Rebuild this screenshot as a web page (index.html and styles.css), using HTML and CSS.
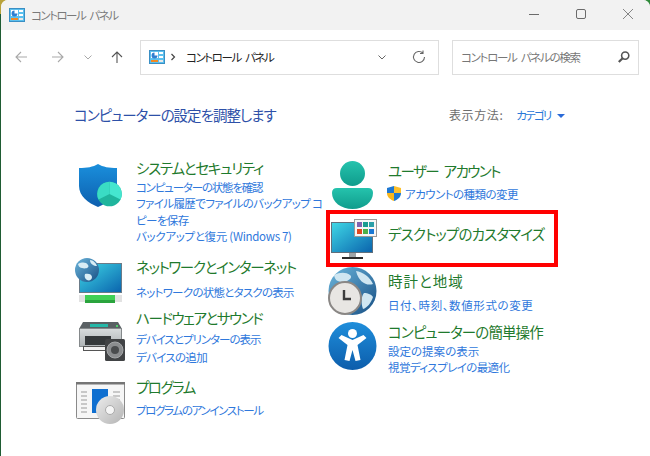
FILE: index.html
```html
<!DOCTYPE html>
<html lang="ja">
<head>
<meta charset="utf-8">
<title>コントロール パネル</title>
<link rel="stylesheet" href="styles.css">
</head>
<body>
<svg width="0" height="0" class="defs">
  <defs>
    <linearGradient id="screen" x1="0" y1="0" x2="1" y2="1"><stop offset="0" stop-color="#3fd8e6"/><stop offset="1" stop-color="#0a63ad"/></linearGradient>
    <linearGradient id="shield" x1="0" y1="0" x2="0" y2="1"><stop offset="0" stop-color="#1a8fdc"/><stop offset="1" stop-color="#0d5fae"/></linearGradient>
    <linearGradient id="teal" x1="0" y1="0" x2="0" y2="1"><stop offset="0" stop-color="#25c3ad"/><stop offset="1" stop-color="#0f9c8c"/></linearGradient>
    <linearGradient id="globe" x1="0" y1="0" x2="1" y2="1"><stop offset="0" stop-color="#6cb6dc"/><stop offset="1" stop-color="#174f84"/></linearGradient>
    <linearGradient id="access" x1="0" y1="0" x2="0" y2="1"><stop offset="0" stop-color="#1f8edb"/><stop offset="1" stop-color="#0c5dab"/></linearGradient>
    <linearGradient id="disc" x1="0" y1="0" x2="1" y2="1"><stop offset="0" stop-color="#ececec"/><stop offset="1" stop-color="#b4b4b4"/></linearGradient>
    <linearGradient id="printer" x1="0" y1="0" x2="0" y2="1"><stop offset="0" stop-color="#d8dcdd"/><stop offset="1" stop-color="#aeb3b5"/></linearGradient>
    <symbol id="cp" viewBox="0 0 16 16">
      <rect x="0.500" y="1.500" width="15" height="13" fill="#5cc0ee" stroke="#3a8fc4"/>
      <rect x="2" y="3" width="7" height="6" fill="#fff"/>
      <path d="M5.500 3.500a3 3 0 1 0 3 3h-3z" fill="#2f7fd0"/>
      <rect x="10" y="3" width="4" height="2" fill="#fff"/>
      <rect x="10" y="7" width="4" height="2" fill="#fff"/>
      <rect x="2" y="11" width="7" height="2" fill="#f08a24"/>
      <rect x="10" y="11" width="4" height="2" fill="#e8e8e8"/>
    </symbol>
  </defs>
</svg>
<div class="window">
  <header class="titlebar">
    <div class="title">
      <svg width="16" height="16"><use href="#cp"/></svg>
      <span>コントロール パネル</span>
    </div>
    <div class="winbtns">
      <svg width="12" height="12" viewBox="0 0 12 12"><path d="M1 6.500h10" stroke="#6b6b6b" fill="none"/></svg>
      <svg width="12" height="12" viewBox="0 0 12 12"><rect x="1.500" y="1.500" width="9" height="9" rx="1.500" stroke="#6b6b6b" fill="none"/></svg>
      <svg width="12" height="12" viewBox="0 0 12 12"><path d="M1 1l10 10M11 1L1 11" stroke="#858585" fill="none"/></svg>
    </div>
  </header>
  <nav class="toolbar">
    <div class="navbtns">
      <svg class="nav-back" width="14" height="14" viewBox="0 0 14 14"><path d="M13 7H2M7 2L2 7l5 5" stroke="#a9a9a9" stroke-width="1.100" fill="none"/></svg>
      <svg class="nav-fwd" width="14" height="14" viewBox="0 0 14 14"><path d="M1 7h11M7 2l5 5-5 5" stroke="#a9a9a9" stroke-width="1.100" fill="none"/></svg>
      <svg class="nav-down" width="10" height="10" viewBox="0 0 10 10"><path d="M1.500 3.500L5 7l3.500-3.500" stroke="#a9a9a9" fill="none"/></svg>
      <svg class="nav-up" width="14" height="14" viewBox="0 0 14 14"><path d="M7 13V2M2 7l5-5 5 5" stroke="#555" stroke-width="1.100" fill="none"/></svg>
    </div>
    <div class="address">
      <svg width="16" height="16"><use href="#cp"/></svg>
      <svg class="crumb" width="6" height="8" viewBox="0 0 6 8"><path d="M1.500 1l3 3-3 3" stroke="#444" stroke-width="1.200" fill="none"/></svg>
      <span class="addr-text">コントロール パネル</span>
      <svg class="addr-down" width="10" height="10" viewBox="0 0 10 10"><path d="M1.500 3.500L5 7l3.500-3.500" stroke="#666" fill="none"/></svg>
      <svg width="14" height="14" viewBox="0 0 14 14"><path d="M12.500 7a5.500 5.500 0 1 1-1.700-4M11 .5v3h-3" stroke="#666" stroke-width="1.100" fill="none"/></svg>
    </div>
    <div class="search">
      <span>コントロール パネルの検索</span>
      <svg width="14" height="14" viewBox="0 0 14 14"><circle cx="8.200" cy="5.600" r="3.600" stroke="#555" stroke-width="1.600" fill="none"/><path d="M5.600 8.200L1.800 12" stroke="#555" stroke-width="2.200"/></svg>
    </div>
  </nav>
  <main class="content">
    <div class="heading-row">
      <h1>コンピューターの設定を調整します</h1>
      <div class="viewby"><span class="vb-label">表示方法:</span><a class="vb-value">カテゴリ</a><span class="caret"></span></div>
    </div>
    <div class="columns">
      <div class="col col-left">
        <section class="item item-sys">
          <svg class="icon" width="43" height="43" viewBox="0 0 43 43">
            <path d="M19 0C24 3 30 4 38 4V22C38 32 29 39 19 43C9 39 0 32 0 22V4C8 4 14 3 19 0Z" fill="url(#shield)"/>
            <circle cx="30.500" cy="30" r="12.300" fill="#1fb59d"/>
            <path d="M30.500 30V17.700A12.300 12.300 0 0 1 41.500 35.500z" fill="#45e6cf"/>
            <path d="M30.500 30L19.500 35.500A12.300 12.300 0 0 1 30.500 17.700z" fill="#3adcc4"/>
          </svg>
          <div class="text">
            <h2>システムとセキュリティ</h2>
            <a class="t-status">コンピューターの状態を確認</a>
            <a class="t-history">ファイル履歴でファイルのバックアップ コ<br>ピーを保存</a>
            <a class="t-backup">バックアップと復元 (Windows 7)</a>
          </div>
        </section>
        <section class="item item-net">
          <svg class="icon" width="47" height="45" viewBox="0 0 47 45">
            <rect x="4.500" y="5.500" width="42" height="29" fill="url(#screen)" stroke="#6b7b88"/>
            <rect x="4" y="37" width="43" height="7" fill="#e2e2e2"/>
            <rect x="10" y="37" width="30" height="8" fill="#3fd055"/>
            <rect x="10" y="42" width="30" height="3" fill="#2aa43d"/>
            <circle cx="12" cy="12" r="12" fill="url(#globe)"/>
            <path d="M3 6c4-2 8-2 10 1s-3 4-6 3-3-1-4-4zM10 16c3-1 7 0 7 3s-3 4-5 3-3-4-2-6zM15 2c3 0 6 3 7 6-3 0-7-2-7-6z" fill="#d9edf5"/>
          </svg>
          <div class="text">
            <h2>ネットワークとインターネット</h2>
            <a class="t-netstatus">ネットワークの状態とタスクの表示</a>
          </div>
        </section>
        <section class="item item-hw">
          <svg class="icon" width="46" height="39" viewBox="0 0 46 39">
            <path d="M4 0h35l4 7H0z" fill="#5a6164"/>
            <rect x="11" y="2" width="18" height="3" fill="#25b8a8"/>
            <rect x="37" y="3" width="2" height="2" fill="#4fd06a"/>
            <rect x="0.500" y="6.500" width="42" height="18" fill="url(#printer)" stroke="#85898b"/>
            <rect x="6" y="14" width="26" height="9" fill="#35393b"/>
            <rect x="4.500" y="24.500" width="26" height="4" fill="#f1f1f1" stroke="#555"/>
            <rect x="26" y="17" width="20" height="22" rx="1.500" fill="#414345"/>
            <circle cx="36" cy="28" r="8" fill="#8b8d8f" stroke="#a5a7a9"/>
            <circle cx="36" cy="28" r="4" fill="#4a4c4e"/>
          </svg>
          <div class="text">
            <h2>ハードウェアとサウンド</h2>
            <a class="t-printers">デバイスとプリンターの表示</a>
            <a class="t-adddev">デバイスの追加</a>
          </div>
        </section>
        <section class="item item-prog">
          <svg class="icon" width="49" height="42" viewBox="0 0 49 42">
            <rect x="0.500" y="0.500" width="48" height="36" rx="1" fill="#f6f6f6" stroke="#8a8a8a"/>
            <rect x="0" y="0" width="49" height="2.500" fill="#757575"/>
            <path d="M5 10h6M5 14h6M5 18h6M5 22h6M5 26h6M5 30h6M37 10h7M37 14h7M37 18h7" stroke="#9a9a9a"/>
            <rect x="16" y="7" width="16" height="24" fill="#0f6fd0"/>
            <circle cx="34" cy="28" r="14" fill="url(#disc)"/>
            <circle cx="34" cy="28" r="4.500" fill="#f5f5f5" stroke="#aaa"/>
          </svg>
          <div class="text">
            <h2>プログラム</h2>
            <a class="t-uninstall">プログラムのアンインストール</a>
          </div>
        </section>
      </div>
      <div class="col col-right">
        <section class="item item-user">
          <svg class="icon" width="41" height="48" viewBox="0 0 41 48">
            <circle cx="20.500" cy="12.500" r="12.500" fill="url(#teal)"/>
            <path d="M5 27H36Q41 27 41 32C41 41 32 48 20.500 48C9 48 0 41 0 32Q0 27 5 27Z" fill="url(#teal)"/>
          </svg>
          <div class="text">
            <h2>ユーザー アカウント</h2>
            <a class="uac"><svg width="14" height="15" viewBox="0 0 14 15"><path d="M7 0l7 2v5H7z" fill="#fbc02d"/><path d="M7 0L0 2v5h7z" fill="#1e78d2"/><path d="M0 7c0 4 3 6.500 7 8V7z" fill="#f8b71c"/><path d="M7 7h7c0 4-3 6.500-7 8z" fill="#1e78d2"/></svg><span>アカウントの種類の変更</span></a>
          </div>
        </section>
        <section class="item item-desk">
          <svg class="icon" width="46" height="40" viewBox="0 0 46 40">
            <rect x="0.500" y="3.500" width="41" height="30" fill="url(#screen)" stroke="#5f6f7c"/>
            <rect x="18" y="34" width="7" height="4" fill="#9ea4a7"/>
            <rect x="11" y="38" width="21" height="2" fill="#2b2b2b"/>
            <rect x="23.500" y="0.500" width="22" height="17" fill="#f7f7f7" stroke="#9a9a9a"/>
            <rect x="26" y="3" width="5" height="5" fill="#8063b0"/><rect x="32" y="3" width="5" height="5" fill="#1a9c90"/><rect x="38" y="3" width="5" height="5" fill="#2a9fa8"/>
            <rect x="26" y="10" width="5" height="5" fill="#e2481f"/><rect x="32" y="10" width="5" height="5" fill="#4db04a"/><rect x="38" y="10" width="5" height="5" fill="#1a78d4"/>
          </svg>
          <div class="text"><h2>デスクトップのカスタマイズ</h2></div>
        </section>
        <section class="item item-clock">
          <svg class="icon" width="49" height="48" viewBox="0 0 49 48">
            <circle cx="24.500" cy="24" r="24" fill="url(#globe)"/>
            <path d="M6 8c6-3 12-3 16 0s-4 8-9 7-6-3-7-7zM28 4c7 1 14 6 17 13-6 2-14-1-17-13zM36 26c4 0 8 2 9 4-2 6-6 11-10 12-2-6-2-12 1-16z" fill="#cfe6f1"/>
            <circle cx="17" cy="31" r="16" fill="#e8e6e3" stroke="#8a8785" stroke-width="2"/>
            <path d="M16 23v9h7" stroke="#3d3d3d" stroke-width="2.400" fill="none"/>
          </svg>
          <div class="text">
            <h2>時計と地域</h2>
            <a class="t-format">日付、時刻、数値形式の変更</a>
          </div>
        </section>
        <section class="item item-ease">
          <svg class="icon" width="49" height="48" viewBox="0 0 48 48">
            <circle cx="24" cy="24" r="24" fill="url(#access)"/>
            <circle cx="24" cy="11.500" r="4.500" fill="#fff"/>
            <path d="M10 16l3-3 11 5 11-5 3 3-9 7 3 15-5 1-3-11-3 11-5-1 3-15z" fill="#fff"/>
          </svg>
          <div class="text">
            <h2>コンピューターの簡単操作</h2>
            <a class="t-suggest">設定の提案の表示</a>
            <a class="t-visual">視覚ディスプレイの最適化</a>
          </div>
        </section>
      </div>
    </div>
  </main>
</div>
</body>
</html>
```
FILE: styles.css
```css
* { box-sizing: border-box; margin: 0; padding: 0; }
html, body { width: 650px; height: 456px; overflow: hidden; }
body {
  background:
    linear-gradient(#2f8a3a, #2f8a3a) right top / 20px 10px no-repeat,
    linear-gradient(180deg, #b9a23c 0, #b9a23c 14px, #1f5c33 14px);
  font-family: "Noto Sans CJK JP", "Noto Sans", sans-serif;
  font-feature-settings: "palt";
  color: #333;
}
.defs { position: absolute; }
svg { display: block; flex: none; }
.window { width: 649px; height: 456px; margin-left: 1px; display: flex; flex-direction: column; background: #fff; border-radius: 7px 7px 0 0; overflow: hidden; }

.titlebar { height: 30px; background: #f2f2f2; display: flex; align-items: center; justify-content: space-between; padding: 0 16px 0 8px; flex: none; }
.title { display: flex; align-items: center; gap: 6px; font-size: 11.500px; letter-spacing: -1.500px; word-spacing: 3px; color: #7a7a7a; }
.winbtns { display: flex; gap: 35px; margin-top: -2px; }

.toolbar { height: 54px; display: flex; align-items: center; padding-left: 13px; flex: none; }
.navbtns { width: 126px; display: flex; align-items: center; flex: none; }
.nav-fwd { margin-left: 23px; }
.nav-down { margin-left: 18px; }
.nav-up { margin-left: 17px; }
.address { width: 299px; height: 35px; border: 1px solid #dedede; display: flex; align-items: center; padding: 0 12px 0 8px; flex: none; }
.crumb { margin-left: 5px; }
.addr-text { margin-left: 10px; font-size: 11.500px; letter-spacing: -1.400px; word-spacing: 3px; color: #222; flex: 1; }
.addr-down { margin-right: 25px; }
.search { width: 187px; height: 35px; margin-left: 13px; border: 1px solid #dedede; display: flex; align-items: center; justify-content: space-between; padding: 0 7px 0 8px; font-size: 11.500px; letter-spacing: -1.300px; word-spacing: 3px; color: #777; }

.content { flex: 1; padding: 18px 0 0 73px; }
.heading-row { display: flex; align-items: center; height: 25px; }
h1 { font-size: 14.500px; font-weight: 400; letter-spacing: -1px; color: #2d50a8; line-height: 25px; width: 375px; }
.viewby { display: flex; align-items: center; }
.vb-label { color: #6d6d6d; font-size: 12px; letter-spacing: .6px; }
.vb-value { color: #2a78d8; margin-left: 13px; font-size: 11.500px; letter-spacing: -1.800px; }
.caret { margin: 2px 0 0 7px; border: 4px solid transparent; border-top: 4px solid #2a6ad8; border-bottom: 0; }

.columns { display: flex; margin-top: 31px; }
.col { display: flex; flex-direction: column; }
.col-left { width: 254px; }
.col-right { width: 250px; padding-top: 3px; }
.item { display: grid; grid-template-columns: 62px 1fr; align-items: start; }
.col-right .item { grid-template-columns: 60px 1fr; }
.text { display: flex; flex-direction: column; }
h2 { font-size: 14.500px; font-weight: 400; color: #1f7a2d; line-height: 20px; white-space: nowrap; }
.text a { font-size: 11.500px; color: #2f78dc; line-height: 16.600px; white-space: nowrap; }

/* left column */
.item-sys { height: 99px; }
.item-sys .icon { margin: 6px 0 0 5px; }
.item-sys h2 { letter-spacing: -1.250px; }
.t-status { margin-top: .7px; letter-spacing: -1.200px; }
.t-history { letter-spacing: -.6px; }
.t-backup { letter-spacing: -.3px; }

.item-net { height: 51px; }
.item-net .icon { margin: 1px 0 0 1px; }
.item-net h2 { letter-spacing: -1.350px; }
.t-netstatus { margin-top: 6.700px; letter-spacing: -.75px; }

.item-hw { height: 69px; }
.item-hw .icon { margin: 14px 0 0 5px; }
.item-hw h2 { letter-spacing: -1.400px; }
.text .t-printers { margin-top: 1.700px; line-height: 18px; letter-spacing: -1px; }
.text .t-adddev { line-height: 18px; letter-spacing: -.7px; }

.item-prog .icon { margin: 5px 0 0 2px; }
.item-prog h2 { letter-spacing: -1.500px; }
.t-uninstall { margin-top: 4.700px; letter-spacing: -1.350px; }

/* right column */
.item-user { height: 49px; }
.item-user .icon { margin-left: 4px; }
.item-user h2 { letter-spacing: -1.600px; word-spacing: 4px; }
.text .uac { display: flex; align-items: center; gap: 4px; margin: 4.700px 0 0 -1px; letter-spacing: -.55px; }

.col-right .item-desk { height: 57px; width: 232px; margin-left: -2px; border: 4px solid #f00; padding-left: 1px; grid-template-columns: 57px 1fr; }
.item-desk .icon { margin-top: 5px; }
.item-desk .text { margin-top: 10px; }
.item-desk h2 { letter-spacing: -.85px; }

.item-clock { height: 53px; }
.item-clock .text { padding-top: 4px; }
.item-clock h2 { letter-spacing: 1px; }
.t-format { margin-top: 5.700px; letter-spacing: .6px; }

.item-ease .icon { margin-top: 2px; }
.item-ease .text { padding-top: 2px; }
.item-ease h2 { letter-spacing: -.9px; }
.t-suggest { margin-top: 1.400px; }
.t-visual { letter-spacing: -.6px; margin-top: -.6px; }
```
